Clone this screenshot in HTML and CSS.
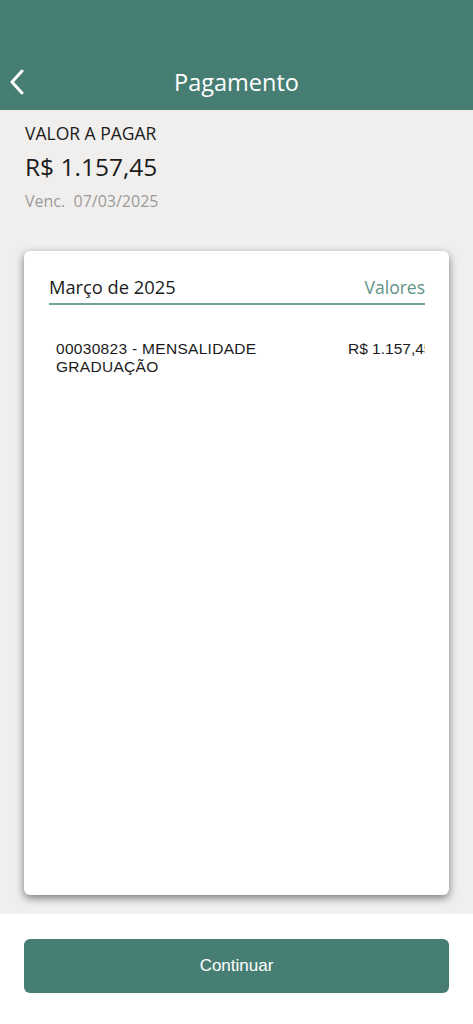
FILE: index.html
```
<!DOCTYPE html>
<html lang="pt-BR">
<head>
<meta charset="utf-8">
<title>Pagamento</title>
<link rel="stylesheet" href="styles.css">
</head>
<body>
<div class="screen">
  <header class="topbar">
    <button class="back" aria-label="Voltar">
      <svg width="16" height="26" viewBox="0 0 16 26"><path d="M13 2 L3 13 L13 24" fill="none" stroke="#fff" stroke-width="3" stroke-linecap="round" stroke-linejoin="round"/></svg>
    </button>
    <h1 class="title">Pagamento</h1>
  </header>
  <main class="content">
    <section class="summary">
      <div class="label">VALOR A PAGAR</div>
      <div class="amount">R$ 1.157,45</div>
      <div class="due">Venc.&nbsp; 07/03/2025</div>
    </section>
    <section class="card">
      <div class="card-head">
        <span class="month">Março de 2025</span>
        <span class="values">Valores</span>
      </div>
      <div class="item">
        <div class="item-desc">00030823 - MENSALIDADE<br>GRADUAÇÃO</div>
        <div class="item-value">R$ 1.157,45</div>
      </div>
    </section>
  </main>
  <footer class="footer">
    <button class="continue">Continuar</button>
  </footer>
</div>
</body>
</html>
```
FILE: styles.css
```
* { box-sizing: border-box; }
html, body { margin: 0; padding: 0; }
body {
  font-family: "Liberation Sans", Arial, sans-serif;
  color: #1b1b1b;
  background: #fff;
}
.screen {
  width: 473px;
  height: 1024px;
  display: flex;
  flex-direction: column;
}
.topbar {
  height: 110px;
  background: #477e73;
  display: flex;
  align-items: flex-end;
  justify-content: center;
  padding-bottom: 14px;
  position: relative;
}
.back {
  position: absolute;
  left: 9px;
  bottom: 14px;
  background: none;
  border: 0;
  padding: 0;
  width: 20px;
  height: 28px;
  display: flex;
  align-items: center;
}
.title {
  margin: 0;
  font-family: "Open Sans", sans-serif;
  font-weight: 400;
  font-size: 23.5px;
  line-height: 28px;
  color: #fff;
}
.content {
  flex: 1;
  background: #f0efed;
  display: flex;
  flex-direction: column;
  padding: 13px 24px 19px;
}
.summary {
  padding-left: 1px;
  display: flex;
  flex-direction: column;
}
.label {
  font-family: "Open Sans", sans-serif;
  font-size: 17.5px;
  line-height: 20px;
  color: #1b1b1b;
}
.amount {
  font-family: "Open Sans", sans-serif;
  font-size: 24.5px;
  line-height: 30px;
  margin-top: 9px;
  color: #1b1b1b;
}
.due {
  font-family: "Open Sans", sans-serif;
  font-size: 16px;
  line-height: 20px;
  margin-top: 9px;
  color: #9b9b9b;
}
.card {
  margin-top: 40px;
  flex: 1;
  background: #fff;
  border-radius: 6px;
  box-shadow: 0 3px 9px rgba(0,0,0,0.5);
  padding: 24px 24px 0 25px;
}
.card-head {
  display: flex;
  justify-content: space-between;
  align-items: baseline;
  border-bottom: 2px solid #72a196;
  padding-bottom: 4px;
}
.month {
  font-family: "Open Sans", sans-serif;
  font-size: 18.3px;
  line-height: 24px;
  color: #1b1b1b;
}
.values {
  font-family: "Open Sans", sans-serif;
  font-size: 17.5px;
  line-height: 24px;
  color: #5f9387;
}
.item {
  display: flex;
  justify-content: space-between;
  padding: 35px 0 0 7px;
}
.item-desc {
  font-size: 15.5px;
  letter-spacing: 0.3px;
  line-height: 18px;
  color: #1b1b1b;
}
.item-value {
  font-size: 15.5px;
  line-height: 18px;
  width: 77px;
  overflow: hidden;
  white-space: nowrap;
  color: #1b1b1b;
}
.footer {
  height: 110px;
  background: #fff;
  padding: 25px 24px 0;
}
.continue {
  width: 100%;
  height: 54px;
  border: 0;
  border-radius: 6px;
  background: #477e73;
  color: #fff;
  font-family: "Liberation Sans", Arial, sans-serif;
  font-size: 17px;
}
```
